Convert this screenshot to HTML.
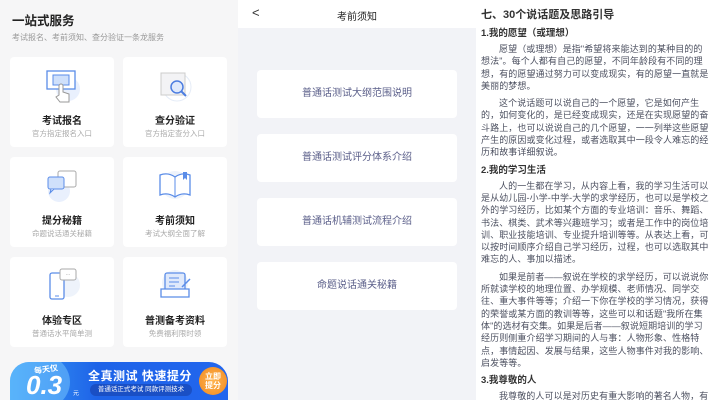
<!DOCTYPE html>
<html><head><meta charset="utf-8"><style>
*{margin:0;padding:0;box-sizing:border-box}
body{width:711px;height:400px;overflow:hidden;position:relative;background:#fff;font-family:"Liberation Sans","Noto Sans CJK SC",sans-serif}
.p{position:absolute;top:0;height:400px;overflow:hidden}
#l{left:0;width:238px;background:#f6f6f7}
#m{left:238px;width:238px;background:#f2f3f7}
#r{left:476px;width:235px;background:#fff}
.t1{position:absolute;left:12px;top:10px;font-size:12.5px;font-weight:bold;color:#222}
.t2{position:absolute;left:12px;top:32px;font-size:8px;color:#999}
.c{position:absolute;width:104px;height:90px;background:#fff;border-radius:4px;text-align:center}
.c .ic{position:absolute;left:32px;top:8px;width:40px;height:40px}
.c b{position:absolute;left:0;right:0;top:55px;font-size:10px;color:#222}
.c i{position:absolute;left:0;right:0;top:71px;font-size:7.5px;color:#aaa;font-style:normal}
.bn{position:absolute;left:10px;top:362px;width:218px;height:38px;border-radius:19px 19px 0 0;background:linear-gradient(90deg,#3aa0f5,#1e63e8 40%,#2266ee);overflow:hidden}
.hd{position:absolute;left:0;top:0;width:238px;height:28px;background:#fff}
.hd span{position:absolute;left:0;right:0;top:8px;text-align:center;font-size:10px;color:#222}
.bt{position:absolute;left:19px;width:200px;height:48px;background:#fff;border-radius:4px;text-align:center;line-height:48px;font-size:10px;color:#5b5f8a}
#r .in{position:absolute;left:5px;top:7px;width:228px;font-size:9px;line-height:12.3px;color:#4c5060}
#r h1{font-size:11px;font-weight:bold;color:#333;line-height:16px;margin-bottom:2px}
#r h2{font-size:9.5px;font-weight:bold;color:#333;line-height:14px;margin:4px 0 2px}
#r p{text-indent:2em;margin-bottom:5px;letter-spacing:0.1px}
</style></head><body>
<div class="p" id="l">
<div class="t1">一站式服务</div>
<div class="t2">考试报名、考前须知、查分验证一条龙服务</div>

<div class="c" style="left:10px;top:57px"><svg class="ic" viewBox="0 0 40 40"><circle cx="26" cy="24" r="12" fill="#e9f0fd"/><rect x="5" y="6" width="28" height="18" fill="#fff" stroke="#5b8de8" stroke-width="1.3"/><rect x="11" y="10" width="16" height="10" fill="#cfe0fb" stroke="#5b8de8"/><path d="M17 30v-9a2 2 0 0 1 4 0v6l6 2v8h-9l-4-5z" fill="#fff" stroke="#999"/></svg><b>考试报名</b><i>官方指定报名入口</i></div>
<div class="c" style="left:123px;top:57px"><svg class="ic" viewBox="0 0 40 40"><circle cx="22" cy="22" r="14" fill="none" stroke="#e5ecf7"/><rect x="6" y="8" width="24" height="22" fill="#f3f3f5" stroke="#ccc"/><circle cx="22" cy="22" r="6" fill="#dfe9fb" stroke="#4c7de0" stroke-width="1.5"/><path d="M26 26l5 5" stroke="#4c7de0" stroke-width="2"/></svg><b>查分验证</b><i>官方指定查分入口</i></div>

<div class="c" style="left:10px;top:157px"><svg class="ic" viewBox="0 0 40 40"><circle cx="17" cy="26" r="11" fill="#e9f0fd"/><rect x="16" y="6" width="18" height="16" rx="2" fill="#fff" stroke="#aaa"/><rect x="6" y="12" width="16" height="12" rx="2" fill="#cfe0fb" stroke="#5b8de8"/><path d="M9 24l-1 4 4-4" stroke="#5b8de8" fill="#cfe0fb"/></svg><b>提分秘籍</b><i>命题说话通关秘籍</i></div>
<div class="c" style="left:123px;top:157px"><svg class="ic" viewBox="0 0 40 40"><circle cx="20" cy="20" r="14" fill="#eef3fb"/><path d="M5 10q8-3 15 2q7-5 15-2v20q-8-3-15 2q-7-5-15-2z" fill="#fff" stroke="#5b8de8" stroke-width="1.3"/><path d="M20 12v20" stroke="#5b8de8"/><path d="M28 7v8l2-2 2 2V7z" fill="#5b8de8"/></svg><b>考前须知</b><i>考试大纲全面了解</i></div>

<div class="c" style="left:10px;top:257px"><svg class="ic" viewBox="0 0 40 40"><circle cx="26" cy="20" r="12" fill="#eef3fb"/><rect x="8" y="8" width="14" height="26" rx="2" fill="#fff" stroke="#5b8de8" stroke-width="1.3"/><path d="M13 31h4" stroke="#5b8de8"/><rect x="18" y="4" width="16" height="11" rx="2" fill="#fff" stroke="#aaa"/><text x="26" y="11" font-size="5" text-anchor="middle" fill="#888">···</text></svg><b>体验专区</b><i>普通话水平简单测</i></div>
<div class="c" style="left:123px;top:257px"><svg class="ic" viewBox="0 0 40 40"><circle cx="20" cy="18" r="13" fill="#eef3fb"/><rect x="10" y="8" width="20" height="18" rx="2" fill="#dfe9fb" stroke="#5b8de8" stroke-width="1.3"/><path d="M14 13h10M14 17h10M14 21h6" stroke="#5b8de8"/><path d="M6 24h28v8H6z" fill="#fff" stroke="#5b8de8" stroke-width="1.3"/><path d="M27 22l8-8" stroke="#5b8de8" stroke-width="1.5"/></svg><b>普测备考资料</b><i>免费福利限时领</i></div>

<div class="bn">
<div style="position:absolute;left:-10px;top:-10px;width:70px;height:60px;border-radius:50%;background:rgba(120,200,255,.5)"></div>
<div style="position:absolute;left:24px;top:2px;font-size:8px;color:#fff;font-weight:bold;transform:rotate(-8deg)">每天仅</div>
<div style="position:absolute;left:16px;top:8px;font-size:26px;color:#fff;font-weight:bold;font-style:italic;line-height:30px">0.3</div>
<div style="position:absolute;left:63px;top:26px;font-size:6px;color:#fff">元</div>
<div style="position:absolute;left:78px;top:5px;font-size:12px;color:#fff;font-weight:bold;letter-spacing:.5px">全真测试 快速提分</div>
<div style="position:absolute;left:80px;top:22px;width:102px;height:12px;border-radius:6px;background:#1a4fc4;font-size:6.5px;color:#fff;text-align:center;line-height:12px">普通话正式考试 同款评测技术</div>
<div style="position:absolute;left:189px;top:5px;width:28px;height:28px;border-radius:50%;background:radial-gradient(#ffb450,#f18a20);font-size:8px;color:#fff;text-align:center;line-height:9px;padding-top:5px;font-weight:bold">立即<br>提分</div>
</div>
</div>

<div class="p" id="m">
<div class="hd"><span style="left:14px;right:auto;top:5px;font-size:13px;color:#333">&lt;</span><span>考前须知</span></div>
<div class="bt" style="top:70px">普通话测试大纲范围说明</div>
<div class="bt" style="top:134px">普通话测试评分体系介绍</div>
<div class="bt" style="top:198px">普通话机辅测试流程介绍</div>
<div class="bt" style="top:262px">命题说话通关秘籍</div>
</div>

<div class="p" id="r"><div class="in">
<h1>七、30个说话题及思路引导</h1>
<h2>1.我的愿望（或理想）</h2>
<p>愿望（或理想）是指"希望将来能达到的某种目的的想法"。每个人都有自己的愿望，不同年龄段有不同的理想，有的愿望通过努力可以变成现实，有的愿望一直就是美丽的梦想。</p>
<p>这个说话题可以说自己的一个愿望，它是如何产生的，如何变化的，是已经变成现实，还是在实现愿望的奋斗路上，也可以说说自己的几个愿望，一一列举这些愿望产生的原因或变化过程，或者选取其中一段令人难忘的经历和故事详细叙说。</p>
<h2>2.我的学习生活</h2>
<p>人的一生都在学习，从内容上看，我的学习生活可以是从幼儿园-小学-中学-大学的求学经历，也可以是学校之外的学习经历，比如某个方面的专业培训：音乐、舞蹈、书法、棋类、武术等兴趣班学习；或者是工作中的岗位培训、职业技能培训、专业提升培训等等。从表达上看，可以按时间顺序介绍自己学习经历，过程，也可以选取其中难忘的人、事加以描述。</p>
<p>如果是前者——叙说在学校的求学经历，可以说说你所就读学校的地理位置、办学规模、老师情况、同学交往、重大事件等等；介绍一下你在学校的学习情况，获得的荣誉或某方面的教训等等，这些可以和话题"我所在集体"的选材有交集。如果是后者——叙说短期培训的学习经历则侧重介绍学习期间的人与事：人物形象、性格特点，事情起因、发展与结果，这些人物事件对我的影响、启发等等。</p>
<h2>3.我尊敬的人</h2>
<p>我尊敬的人可以是对历史有重大影响的著名人物，有</p>
</div></div>
</body></html>
